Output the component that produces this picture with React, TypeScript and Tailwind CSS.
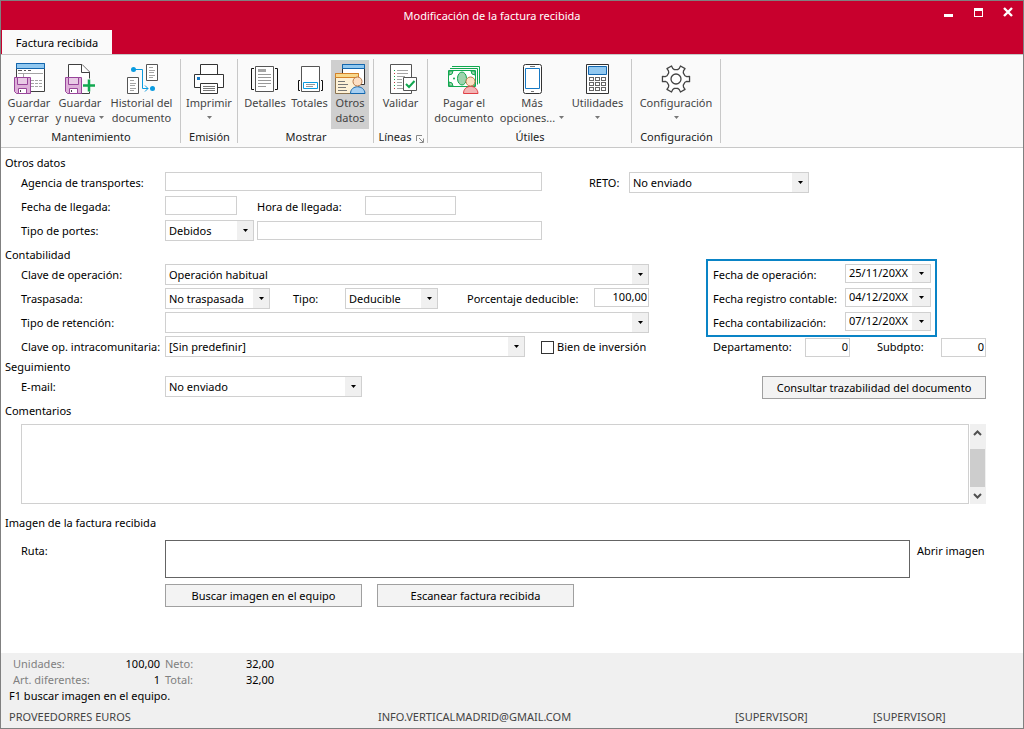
import type { ReactNode } from "react";

const cx = (...names: (string | undefined)[]) => names.filter(Boolean).join(" ");

/* ---------- Ribbon icons (32x32) ---------- */

function Icon({ children }: { children: ReactNode }) {
  return (
    <svg viewBox="0 0 32 32" className="h-8 w-8 shrink-0" fill="none" strokeWidth="1" aria-hidden>
      {children}
    </svg>
  );
}

function Floppy() {
  return (
    <g>
      <path d="M1.5 15.5h16v16h-14l-2-2z" fill="#deb0d9" stroke="#98459a" />
      <path d="M4.5 15.5h10v7h-10z" fill="#e9cbe6" stroke="#98459a" />
      <path d="M5.5 26.5h8v5h-8z" fill="#fff" stroke="#98459a" />
      <path d="M7.5 28v2" stroke="#444" />
    </g>
  );
}

function SaveCloseIcon() {
  return (
    <Icon>
      <path d="M3.5 1.5h28v28h-28z" fill="#fff" stroke="#404040" />
      <path d="M3.5 1.5h28v5h-28z" fill="#91c8f0" stroke="#1266ae" />
      <path d="M5 8.5h4m2 0h2m2 0h3" stroke="#555" />
      <path d="M5 11.5h25M10.5 11v5M18 18.5h3m1 0h3m1 0h3M18 21.5h3m1 0h3m1 0h3M18 24.5h3m1 0h3m1 0h3" stroke="#a5a5a5" />
      <Floppy />
    </Icon>
  );
}

function SaveNewIcon() {
  return (
    <Icon>
      <path d="M4.5 16V2.5H18l7.5 7.5v21.5H16" fill="#fff" stroke="#404040" />
      <path d="M17.5 2.5v8h8" fill="#fff" stroke="#404040" />
      <path d="M18 16.500h14v13H18z" fill="#fafafa" />
      <Floppy />
      <path d="M25 17.5v12M19 23.5h12" stroke="#12a850" strokeWidth="2.5" />
    </Icon>
  );
}

function HistoryIcon() {
  return (
    <Icon>
      <path d="M20.5 2.5h11v16h-11zM1.5 15.5h11v16h-11z" fill="#fff" stroke="#555" />
      <path d="M23 5.5h4M23 8.500h6M23 10.5h5M23 13.5h6M23 15.5h4M4 18.5h4M4 21.5h6M4 23.5h5M4 26.5h6M4 28.5h4" stroke="#a5a5a5" />
      <path d="M8 7.500h8.500v19H22M19 23.500l3 3-3 3" stroke="#0a9be0" />
      <circle cx="7.5" cy="7.5" r="2.5" fill="#0a9be0" />
      <circle cx="26.5" cy="26.5" r="2.5" fill="#0a9be0" />
    </Icon>
  );
}

function PrintIcon() {
  return (
    <Icon>
      <path d="M7.5 2.5h17v10h-17zM1.5 12.5h29v13h-29z" fill="#fff" stroke="#333" />
      <path d="M7.5 21.5h17v10h-17z" fill="#fff" stroke="#333" />
      <path d="M4 15h3v3H4z" fill="#1779c4" />
      <path d="M10 24.5h12M10 26.5h12M10 28.5h12" stroke="#777" />
    </Icon>
  );
}

function DetailsIcon() {
  return (
    <Icon>
      <path d="M6.5 4.5h18v25h-18z" fill="#fff" stroke="#555" />
      <path d="M5 6.5H2.5v21H5M26 6.5h2.5v21H26" stroke="#111" />
      <path d="M9 7h8v3H9z" fill="#a5a5a5" />
      <path d="M9 12.5h13M9 15.5h13M9 18.5h13M9 21.5h13M9 24.5h8" stroke="#999" />
    </Icon>
  );
}

function TotalsIcon() {
  return (
    <Icon>
      <path d="M7.5 4.5h18v25h-18z" fill="#fff" stroke="#555" />
      <path d="M6 18.5H4.5v10H6M27 18.5h1.5v10H27" stroke="#111" />
      <path d="M9.5 20.5h14v6h-14z" fill="#fff" stroke="#0a9be0" />
      <path d="M12 22.5h9M12 24.5h7" stroke="#999" />
    </Icon>
  );
}

function OtherDataIcon() {
  return (
    <Icon>
      <path d="M8.5 2.5h22v20h-22z" fill="#fff" stroke="#333" />
      <path d="M8.5 2.5h22v4h-22z" fill="#91c8f0" stroke="#1266ae" />
      <path d="M1.5 11.5h23v20h-23z" fill="#fdf1d6" stroke="#8a7350" />
      <path d="M1.5 11.5h23v4h-23z" fill="#f8d98c" stroke="#d58229" />
      <path d="M4 19.5h7M4 22.5h10M4 25.5h8M4 28.5h9" stroke="#777" />
      <path d="M16.5 31.5c0-9 14-9 14.5 0z" fill="#a6cff2" stroke="#1266ae" />
      <circle cx="23.5" cy="19.5" r="4.5" fill="#fddfc3" stroke="#b97a4b" />
    </Icon>
  );
}

function ValidateIcon() {
  return (
    <Icon>
      <path d="M5.5 2.5h21v29h-21z" fill="#fff" stroke="#555" />
      <path d="M12 8.5h11M12 11.5h11M12 14.5h8M12 17.5h5M12 20.5h5M12 23.5h5M12 26.5h8" stroke="#a5a5a5" />
      <path d="M9.5 8v1M9.5 14v1M9.5 17v1M9.5 23v1" stroke="#12a850" />
      <path d="M9.5 11v1M9.5 20v1M9.5 26v1" stroke="#c8343c" />
      <path d="M18.5 15.5h13v13h-13z" fill="#fff" stroke="#555" />
      <path d="M21 22l3 3 5.500-6" stroke="#12a850" strokeWidth="2" />
    </Icon>
  );
}

function PayIcon() {
  return (
    <Icon>
      <path d="M4 4.5h27.500v17M2 6.5h27.500v16" stroke="#12a850" />
      <path d="M0.5 8.5h27v16h-27z" fill="#fff" stroke="#12a850" />
      <path d="M1 9h4q0 4-4 4zM27 9h-4q0 4 4 4zM1 24h4q0-4-4-4zM27 24h-4q0-4 4-4z" fill="#9ed3ad" stroke="#12a850" />
      <ellipse cx="14" cy="16.5" rx="4.5" ry="6.5" fill="#9ed3ad" stroke="#12a850" />
      <circle cx="6" cy="16.5" r="1" fill="#12a850" />
      <path d="M15.5 31.5c0-9.500 14-9.500 14.500 0z" fill="#f3b4b4" stroke="#df3f46" />
      <circle cx="22.5" cy="19.5" r="4.5" fill="#fddfc3" stroke="#b97a4b" />
    </Icon>
  );
}

function PhoneIcon() {
  return (
    <Icon>
      <rect x="7.5" y="2.5" width="18" height="29" rx="2" fill="#fff" stroke="#333" />
      <path d="M9.5 6.5h14v20h-14z" stroke="#1779c4" />
      <path d="M14 4.5h5M15 29.5h3" stroke="#777" />
    </Icon>
  );
}

function CalculatorIcon() {
  return (
    <Icon>
      <path d="M4.5 2.5h22v29h-22z" fill="#fff" stroke="#333" />
      <path d="M6.5 4.5h18v8h-18z" fill="#91c8f0" stroke="#1266ae" />
      {[15.5, 20.5, 25.5].map((y) =>
        [7.5, 13.5, 19.5].map((x) => (
          <rect key={`${x}-${y}`} x={x} y={y} width="4" height="3" fill="#fff" stroke="#666" />
        ))
      )}
    </Icon>
  );
}

// six teeth around (16, 17)
const gearPoints = Array.from({ length: 6 }, (_, i) => i * 60)
  .flatMap((a) => [
    [a - 20, 9.5],
    [a - 13, 11],
    [a - 11, 13.8],
    [a + 11, 13.8],
    [a + 13, 11],
    [a + 20, 9.5],
  ])
  .map(([a, r]) => {
    const t = (a * Math.PI) / 180;
    return `${(16 + r * Math.cos(t)).toFixed(2)},${(17 + r * Math.sin(t)).toFixed(2)}`;
  })
  .join(" ");

function GearIcon() {
  return (
    <Icon>
      <polygon points={gearPoints} fill="#fff" stroke="#444" strokeWidth="1.3" strokeLinejoin="round" />
      <circle cx="16" cy="17" r="5" stroke="#444" strokeWidth="1.3" />
    </Icon>
  );
}

/* ---------- Ribbon ---------- */

function Caret({ className }: { className?: string }) {
  return (
    <svg viewBox="0 0 5 3" className={cx("inline-block h-[3px] w-[5px] shrink-0", className)} aria-hidden>
      <path d="M0 0h5L2.5 3z" fill="currentColor" />
    </svg>
  );
}

type RibbonButtonProps = {
  icon: ReactNode;
  lines: string[];
  width: string;
  menu?: boolean;
  active?: boolean;
};

function RibbonButton({ icon, lines, width, menu, active }: RibbonButtonProps) {
  return (
    <button
      type="button"
      className={cx(
        "flex h-[69px] flex-col items-center whitespace-nowrap pt-[2px] text-[#444]",
        width,
        active ? "bg-[#cfcfcf]" : undefined
      )}
    >
      {icon}
      <span className="pt-[1px] leading-[15px]">{lines[0]}</span>
      <span className="flex h-[15px] items-center gap-1 leading-[15px]">
        {lines[1]}
        {menu && <Caret className="text-[#777]" />}
      </span>
    </button>
  );
}

function RibbonGroup({ label, children, launcher }: { label: string; children: ReactNode; launcher?: boolean }) {
  return (
    <div className="flex flex-col border-r border-[#c8c8c8]">
      <div className="flex px-[4px] pt-[1px]">{children}</div>
      <div className="flex flex-1 items-end justify-center gap-1 pl-[1px] leading-3 text-[#222]">
        {label}
        {launcher && (
          <button type="button" aria-label="Opciones de líneas">
            <svg viewBox="0 0 8 8" className="h-2 w-2" fill="none" stroke="#888" aria-hidden>
              <path d="M0.5 6V0.5H6M3 3l4 4M7.5 3.5v4h-4" />
            </svg>
          </button>
        )}
      </div>
    </div>
  );
}

/* ---------- Form controls ---------- */

function Label({ id, children, width }: { id: string; children: ReactNode; width: string }) {
  return (
    <label htmlFor={id} className={cx("shrink-0 whitespace-nowrap leading-6", width)}>
      {children}
    </label>
  );
}

function Select({ id, value, width, options }: { id: string; value: string; width: string; options?: string[] }) {
  return (
    <div className={cx("relative mt-[1px] h-[21px]", width)}>
      <select
        id={id}
        defaultValue={value}
        className="block h-full w-full appearance-none rounded-none border border-[#d0d0d0] bg-white pt-[2px] pr-5 pl-[3px] outline-none focus:border-[#0a84c6]"
      >
        {(options ?? [value]).map((o) => (
          <option key={o}>{o}</option>
        ))}
      </select>
      <span className="pointer-events-none absolute inset-y-[1px] right-[1px] flex w-4 items-center justify-center bg-[#f0f0f0]">
        <Caret />
      </span>
    </div>
  );
}

function TextInput({ id, value, width }: { id: string; value?: string; width: string }) {
  return (
    <input
      id={id}
      type="text"
      defaultValue={value}
      className={cx(
        "mt-[1px] h-[19px] min-w-0 border border-[#d0d0d0] bg-white px-[1px] pb-[2px] outline-none focus:border-[#0a84c6]",
        width
      )}
    />
  );
}

function DateField({ id, label, value }: { id: string; label: string; value: string }) {
  return (
    <div className="flex h-6 justify-between">
      <Label id={id} width="w-[132px]">
        {label}
      </Label>
      <div className="mt-[1px] flex h-[19px] w-[86px] border border-[#d0d0d0]">
        <input id={id} type="text" defaultValue={value} className="min-w-0 flex-1 pl-[3px] outline-none" />
        <button type="button" aria-label={`Calendario: ${label}`} className="flex w-[18px] items-center justify-center bg-[#f0f0f0]">
          <Caret />
        </button>
      </div>
    </div>
  );
}

function PushButton({ children, width }: { children: ReactNode; width: string }) {
  return (
    <button type="button" className={cx("h-[23px] border border-[#a0a0a0] bg-[#f3f3f3] pt-[1px] hover:bg-[#e8e8e8]", width)}>
      {children}
    </button>
  );
}

function Heading({ children }: { children: ReactNode }) {
  return <h2 className="pt-1 leading-4">{children}</h2>;
}

/* ---------- Window ---------- */

export default function App() {
  return (
    <div className="flex min-h-screen flex-col border border-[#808080] bg-white font-['Noto_Sans','Open_Sans',sans-serif] text-[11px] text-black">
      <header className="bg-[#c8002d]">
        <div className="flex h-[29px] pl-[46px] text-white">
          <h1 className="flex-1 text-center leading-[29px]">Modificación de la factura recibida</h1>
          <div className="flex h-[22px] w-[86px] items-center justify-between pr-[10px] pl-[6px]">
            <button type="button" aria-label="Minimizar">
              <svg viewBox="0 0 10 10" className="h-[10px] w-[10px]" aria-hidden>
                <path d="M1 7h9v3H1z" fill="#fff" />
              </svg>
            </button>
            <button type="button" aria-label="Maximizar">
              <svg viewBox="0 0 10 10" className="h-[10px] w-[10px]" aria-hidden>
                <path d="M1 1h9v9H1zM2 4v5h7V4z" fill="#fff" fillRule="evenodd" />
              </svg>
            </button>
            <button type="button" aria-label="Cerrar">
              <svg viewBox="0 0 10 10" className="h-[10px] w-[10px]" aria-hidden>
                <path d="M1 1l8 8M9 1L1 9" stroke="#fff" strokeWidth="2.4" />
              </svg>
            </button>
          </div>
        </div>
        <button type="button" className="ml-[1px] block h-6 w-[110px] bg-[#fafafa] pt-[2px]">
          Factura recibida
        </button>
      </header>

      <nav className="flex border-y border-[#c8c8c8] bg-[#fafafa]">
        <div className="flex h-[92px] pt-1 pb-1">
          <RibbonGroup label="Mantenimiento">
            <RibbonButton icon={<SaveCloseIcon />} lines={["Guardar", "y cerrar"]} width="w-[48px]" />
            <RibbonButton icon={<SaveNewIcon />} lines={["Guardar", "y nueva"]} width="w-[54px]" menu />
            <RibbonButton icon={<HistoryIcon />} lines={["Historial del", "documento"]} width="w-[69px]" />
          </RibbonGroup>
          <RibbonGroup label="Emisión">
            <RibbonButton icon={<PrintIcon />} lines={["Imprimir", ""]} width="w-[48px]" menu />
          </RibbonGroup>
          <RibbonGroup label="Mostrar">
            <RibbonButton icon={<DetailsIcon />} lines={["Detalles"]} width="w-[46px]" />
            <RibbonButton icon={<TotalsIcon />} lines={["Totales"]} width="w-[43px]" />
            <RibbonButton icon={<OtherDataIcon />} lines={["Otros", "datos"]} width="w-[38px]" active />
          </RibbonGroup>
          <RibbonGroup label="Líneas" launcher>
            <RibbonButton icon={<ValidateIcon />} lines={["Validar"]} width="w-[45px]" />
          </RibbonGroup>
          <RibbonGroup label="Útiles">
            <RibbonButton icon={<PayIcon />} lines={["Pagar el", "documento"]} width="w-[64px]" />
            <RibbonButton icon={<PhoneIcon />} lines={["Más", "opciones..."]} width="w-[72px]" menu />
            <RibbonButton icon={<CalculatorIcon />} lines={["Utilidades", ""]} width="w-[59px]" menu />
          </RibbonGroup>
          <RibbonGroup label="Configuración">
            <RibbonButton icon={<GearIcon />} lines={["Configuración", ""]} width="w-[80px]" menu />
          </RibbonGroup>
        </div>
      </nav>

      <main className="flex-1 pt-[3px] pr-[37px] pb-[46px] pl-1">
        <section>
          <Heading>Otros datos</Heading>
          <div className="flex pl-4">
            <div className="flex-1">
              <div className="flex h-6">
                <Label id="agencia" width="w-36">Agencia de transportes:</Label>
                <TextInput id="agencia" width="flex-1" />
              </div>
              <div className="flex h-6">
                <Label id="fecha-llegada" width="w-36">Fecha de llegada:</Label>
                <TextInput id="fecha-llegada" width="mr-5 w-[72px]" />
                <Label id="hora-llegada" width="w-[108px]">Hora de llegada:</Label>
                <TextInput id="hora-llegada" width="w-[91px]" />
              </div>
              <div className="flex h-6">
                <Label id="portes" width="w-36">Tipo de portes:</Label>
                <Select id="portes" value="Debidos" options={["Debidos", "Pagados"]} width="mr-[3px] w-[89px]" />
                <input
                  type="text"
                  aria-label="Detalle de portes"
                  className="mt-[2px] h-[19px] min-w-0 flex-1 border border-[#d0d0d0] px-[1px] outline-none"
                />
              </div>
            </div>
            <div className="flex w-[444px] pl-[47px]">
              <Label id="reto" width="w-10">RETO:</Label>
              <Select id="reto" value="No enviado" width="w-[180px]" />
            </div>
          </div>
        </section>

        <section>
          <Heading>Contabilidad</Heading>
          <div className="flex pl-4">
            <div className="flex-1">
              <div className="flex h-6">
                <Label id="clave" width="w-36">Clave de operación:</Label>
                <Select id="clave" value="Operación habitual" width="flex-1" />
              </div>
              <div className="flex h-6">
                <Label id="traspasada" width="w-36">Traspasada:</Label>
                <Select id="traspasada" value="No traspasada" width="mr-[23px] w-[105px]" />
                <Label id="tipo" width="w-[52px]">Tipo:</Label>
                <Select id="tipo" value="Deducible" width="w-[93px]" />
                <Label id="porcentaje" width="ml-auto w-[127px]">Porcentaje deducible:</Label>
                <TextInput id="porcentaje" value="100,00" width="w-[55px] text-right" />
              </div>
              <div className="flex h-6">
                <Label id="retencion" width="w-36">Tipo de retención:</Label>
                <Select id="retencion" value="" width="flex-1" />
              </div>
              <div className="flex h-6">
                <Label id="intra" width="w-36">Clave op. intracomunitaria:</Label>
                <Select id="intra" value="[Sin predefinir]" width="flex-1" />
                <label className="ml-4 flex w-[108px] items-center gap-[3px] whitespace-nowrap">
                  <input type="checkbox" className="h-[13px] w-[13px] appearance-none border border-[#333] bg-white checked:bg-[#333]" />
                  Bien de inversión
                </label>
              </div>
            </div>

            <div className="-mt-1 ml-[57px] w-[280px]">
              <div className="w-[231px] border-2 border-[#0a84c6] pt-[2px] pr-1 pl-[5px]">
                <DateField id="f-operacion" label="Fecha de operación:" value="25/11/20XX" />
                <DateField id="f-registro" label="Fecha registro contable:" value="04/12/20XX" />
                <DateField id="f-contab" label="Fecha contabilización:" value="07/12/20XX" />
              </div>
              <div className="flex h-5 items-center pl-[7px]">
                <Label id="depto" width="w-[92px]">Departamento:</Label>
                <TextInput id="depto" value="0" width="w-[45px] text-right" />
                <Label id="subdpto" width="ml-[27px] w-16">Subdpto:</Label>
                <TextInput id="subdpto" value="0" width="w-[45px] text-right" />
              </div>
            </div>
          </div>
        </section>

        <section>
          <h2 className="leading-4">Seguimiento</h2>
          <div className="flex h-6 pl-4">
            <Label id="email" width="w-36">E-mail:</Label>
            <Select id="email" value="No enviado" width="w-[197px]" />
            <div className="ml-auto pt-[1px]">
              <PushButton width="w-[224px]">Consultar trazabilidad del documento</PushButton>
            </div>
          </div>
        </section>

        <section>
          <Heading>Comentarios</Heading>
          <div className="flex gap-[1px] pt-[5px] pl-4">
            <textarea aria-label="Comentarios" className="block h-20 flex-1 resize-none border border-[#d0d0d0] p-1 outline-none" />
            <div className="flex h-20 w-4 flex-col bg-[#f0f0f0] text-[#505050]" aria-hidden>
              <svg viewBox="0 0 16 25" className="h-[25px] w-4" fill="none" stroke="currentColor" strokeWidth="2">
                <path d="M4 11l3.5-3.5L11 11" />
              </svg>
              <div className="mr-[1px] flex-1 bg-[#cdcdcd]" />
              <svg viewBox="0 0 16 17" className="h-[17px] w-4" fill="none" stroke="currentColor" strokeWidth="2">
                <path d="M4 7l3.5 3.5L11 7" />
              </svg>
            </div>
          </div>
        </section>

        <section className="pt-[7px]">
          <Heading>Imagen de la factura recibida</Heading>
          <div className="flex pt-2 pl-4">
            <Label id="ruta" width="w-36">Ruta:</Label>
            <input id="ruta" type="text" className="mt-[1px] h-[38px] min-w-0 flex-1 border border-[#646464] px-1 outline-none" />
            <a href="#imagen" className="w-[76px] pl-[7px] leading-6 whitespace-nowrap">
              Abrir imagen
            </a>
          </div>
          <div className="flex gap-[15px] pt-[6px] pl-40">
            <PushButton width="w-[197px]">Buscar imagen en el equipo</PushButton>
            <PushButton width="w-[197px]">Escanear factura recibida</PushButton>
          </div>
        </section>
      </main>

      <footer className="bg-[#f0f0f0] px-2 pt-[3px] pb-[3px] leading-4">
        <dl className="grid grid-cols-[80px_67px_51px_63px] pl-1 text-[#808080]">
          <dt>Unidades:</dt>
          <dd className="text-right text-black">100,00</dd>
          <dt className="pl-[5px]">Neto:</dt>
          <dd className="text-right text-black">32,00</dd>
          <dt>Art. diferentes:</dt>
          <dd className="text-right text-black">1</dd>
          <dt className="pl-[5px]">Total:</dt>
          <dd className="text-right text-black">32,00</dd>
        </dl>
        <p>F1 buscar imagen en el equipo.</p>
        <div className="flex pt-[5px] text-[#444]">
          <span className="w-[369px]">PROVEEDORRES EUROS</span>
          <span className="flex-1">INFO.VERTICALMADRID@GMAIL.COM</span>
          <span className="w-[138px]">[SUPERVISOR]</span>
          <span className="w-[142px]">[SUPERVISOR]</span>
        </div>
      </footer>
    </div>
  );
}
